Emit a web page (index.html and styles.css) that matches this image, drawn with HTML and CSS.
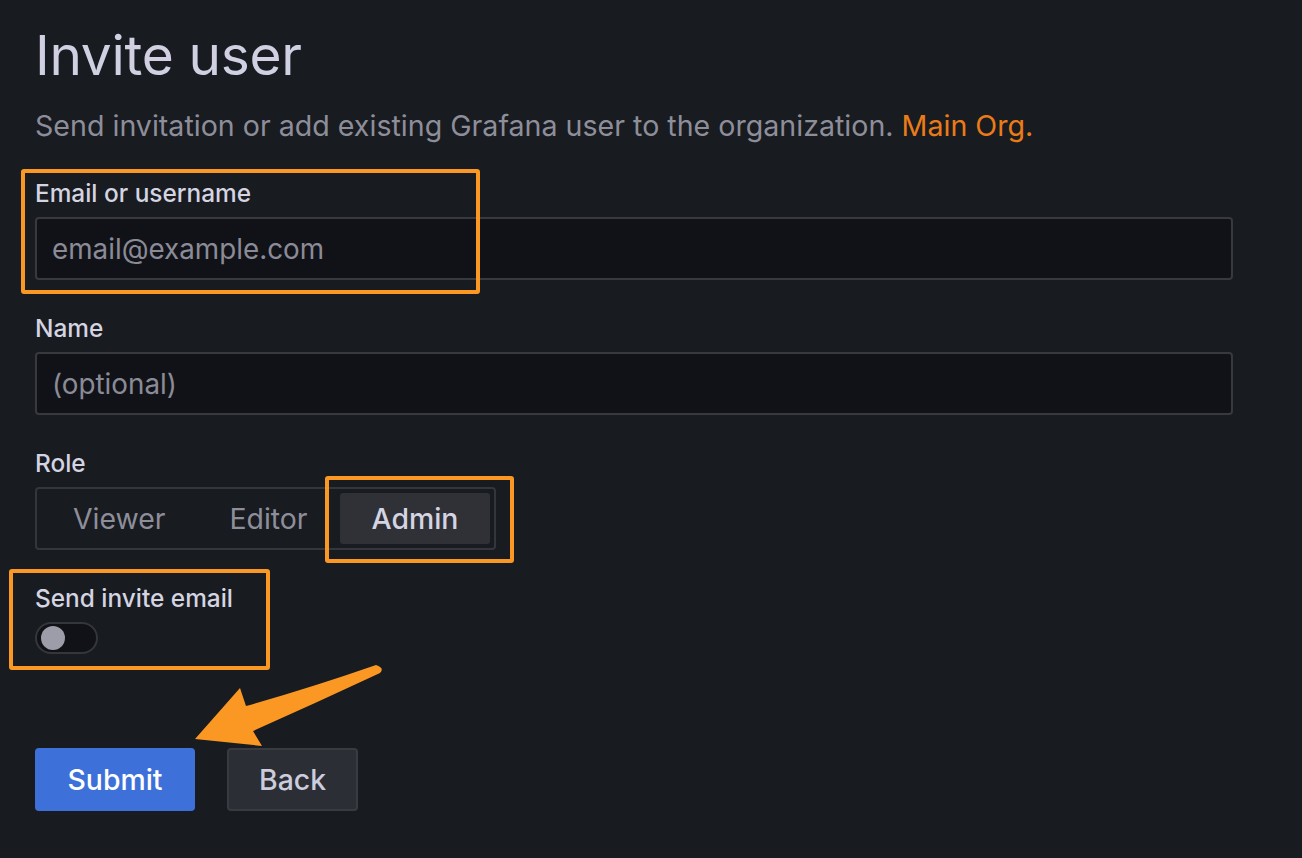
FILE: index.html
```html
<!DOCTYPE html>
<html lang="en">
<head>
<meta charset="utf-8">
<title>Invite user</title>
<link rel="stylesheet" href="styles.css">
</head>
<body>
<main class="page">
  <h1 class="title">Invite user</h1>
  <p class="subtitle">Send invitation or add existing Grafana user to the organization. <span class="org">Main Org.</span></p>

  <div class="field field-first">
    <label class="label">Email or username</label>
    <div class="input"><span class="placeholder">email@example.com</span></div>
  </div>

  <div class="field">
    <label class="label">Name</label>
    <div class="input"><span class="placeholder">(optional)</span></div>
  </div>

  <div class="field">
    <label class="label">Role</label>
    <div class="radio-group">
      <span class="radio">Viewer</span>
      <span class="radio">Editor</span>
      <span class="radio radio-active">Admin</span>
    </div>
  </div>

  <div class="field">
    <label class="label">Send invite email</label>
    <div class="toggle"><span class="knob"></span></div>
  </div>

  <div class="actions">
    <button class="btn btn-primary">Submit</button>
    <button class="btn btn-secondary">Back</button>
  </div>
</main>

<div class="hl hl-email"></div>
<div class="hl hl-admin"></div>
<div class="hl hl-invite"></div>
<svg class="arrow" width="1302" height="858" viewBox="0 0 1302 858" xmlns="http://www.w3.org/2000/svg">
  <path d="M376 665 Q 310 688 246 706 L 240 688 L 195 739 L 262 746 L 253 731 Q 318 702 380 673 Q 385 668 376 665 Z" fill="#fb9823"/>
</svg>
</body>
</html>
```
FILE: styles.css
```css
html, body {
  margin: 0;
  padding: 0;
  background: #181b1f;
}
body {
  width: 1302px;
  height: 858px;
  overflow: hidden;
  font-family: Inter, "Noto Sans", "Liberation Sans", sans-serif;
  color: #ccccdc;
  position: relative;
}
.page {
  padding: 22px 0 0 35px;
  width: 1198px;
}
.title {
  margin: 0;
  font-size: 55px;
  line-height: 66px;
  font-weight: 400;
  color: #d0d0e2;
  letter-spacing: -0.3px;
}
.subtitle {
  margin: 20px 0 0 0;
  font-size: 28.6px;
  line-height: 36px;
  color: #8e8e9b;
}
.org {
  color: #eb7b18;
}
.field {
  margin-top: 34px;
}
.field-first {
  margin-top: 35px;
}
.label {
  display: block;
  font-size: 24.4px;
  line-height: 28px;
  font-weight: 500;
  color: #d4d4e2;
  margin-bottom: 10px;
}
.input {
  box-sizing: border-box;
  height: 63px;
  background: #111217;
  border: 2px solid #37393f;
  border-radius: 4px;
  display: flex;
  align-items: center;
  padding-left: 15px;
}
.placeholder {
  font-size: 27.8px;
  color: #8b8b97;
}
.radio-group {
  box-sizing: border-box;
  display: inline-flex;
  height: 63px;
  padding: 4px;
  border: 2px solid #34363c;
  border-radius: 4px;
}
.radio {
  display: flex;
  align-items: center;
  padding: 0 32px;
  font-size: 28.4px;
  color: #8e8e9b;
  border-radius: 3px;
}
.radio-active {
  background: #2f3137;
  color: #d4d4e2;
  font-weight: 500;
}
.toggle {
  box-sizing: border-box;
  width: 63px;
  height: 32px;
  border-radius: 16px;
  background: #111217;
  border: 2px solid #34363c;
  display: flex;
  align-items: center;
  padding-left: 4px;
}
.knob {
  width: 24px;
  height: 24px;
  border-radius: 50%;
  background: #9d9daa;
}
.actions {
  display: flex;
  gap: 32px;
  margin-top: 94px;
}
.btn {
  box-sizing: border-box;
  height: 63px;
  border-radius: 4px;
  font-family: Inter, "Noto Sans", "Liberation Sans", sans-serif;
  font-size: 28.4px;
  font-weight: 500;
  padding: 0;
  cursor: pointer;
}
.btn-primary {
  width: 160px;
  background: #3d71d9;
  color: #ffffff;
  border: none;
}
.btn-secondary {
  width: 131px;
  background: #2b2e34;
  color: #ccccdc;
  border: 2px solid #393b41;
}
.hl {
  position: absolute;
  box-sizing: border-box;
  border: 4px solid #fb9823;
  border-radius: 3px;
}
.hl-email {
  left: 21px;
  top: 169px;
  width: 459px;
  height: 125px;
}
.hl-admin {
  left: 325px;
  top: 476px;
  width: 189px;
  height: 87px;
}
.hl-invite {
  left: 9px;
  top: 569px;
  width: 261px;
  height: 101px;
}
.arrow {
  position: absolute;
  left: 0;
  top: 0;
  pointer-events: none;
}
```
